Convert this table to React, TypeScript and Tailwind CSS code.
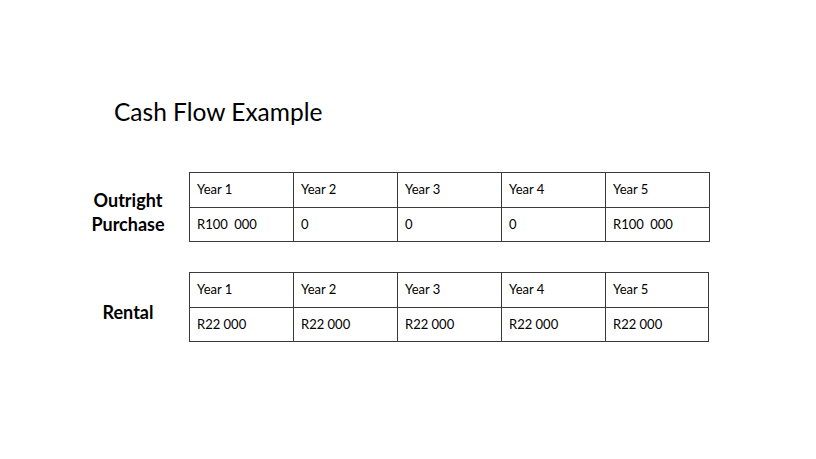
import React from 'react';

const years = ['Year 1', 'Year 2', 'Year 3', 'Year 4', 'Year 5'];

const rows = [
  { label: ['Outright', 'Purchase'], values: ['R100\u2002000', '0', '0', '0', 'R100\u2002000'], mt: 'mt-[44px]', narrow: false },
  { label: ['Rental'], values: ['R22 000', 'R22 000', 'R22 000', 'R22 000', 'R22 000'], mt: 'mt-[30px]', narrow: true },
];

const CashTable: React.FC<{ values: string[]; narrow: boolean }> = ({ values, narrow }) => {
  const cell = (i: number) =>
    `${i === 4 && narrow ? 'w-[103px]' : 'w-[104px]'} border border-[#3a3a3a] pl-[7px] align-middle whitespace-pre`;
  return (
    <table className="border-collapse text-[13px] text-black">
      <tbody>
        <tr>
          {years.map((y, i) => (
            <td key={y} className={`h-[35px] ${cell(i)}`}>
              {y}
            </td>
          ))}
        </tr>
        <tr>
          {values.map((v, i) => (
            <td key={i} className={`h-[34px] ${cell(i)}`}>
              {v}
            </td>
          ))}
        </tr>
      </tbody>
    </table>
  );
};

export default function App() {
  return (
    <div className="w-[816px] h-[459px] bg-white overflow-hidden" style={{ fontFamily: 'Lato, "Open Sans", sans-serif' }}>
      <div className="pt-[96px] pl-[114px]">
        <h1 className="text-[24.5px] leading-[32px] text-black font-normal">Cash Flow Example</h1>
      </div>
      {rows.map((r, idx) => (
        <div key={idx} className={`flex items-center ${r.mt}`}>
          <div className="w-[189px] pl-[67px] pt-[9px] text-center">
            <div className="text-[18px] leading-[24px] font-bold text-black">
              {r.label.map((l) => (
                <div key={l}>{l}</div>
              ))}
            </div>
          </div>
          <CashTable values={r.values} narrow={r.narrow} />
        </div>
      ))}
    </div>
  );
}
